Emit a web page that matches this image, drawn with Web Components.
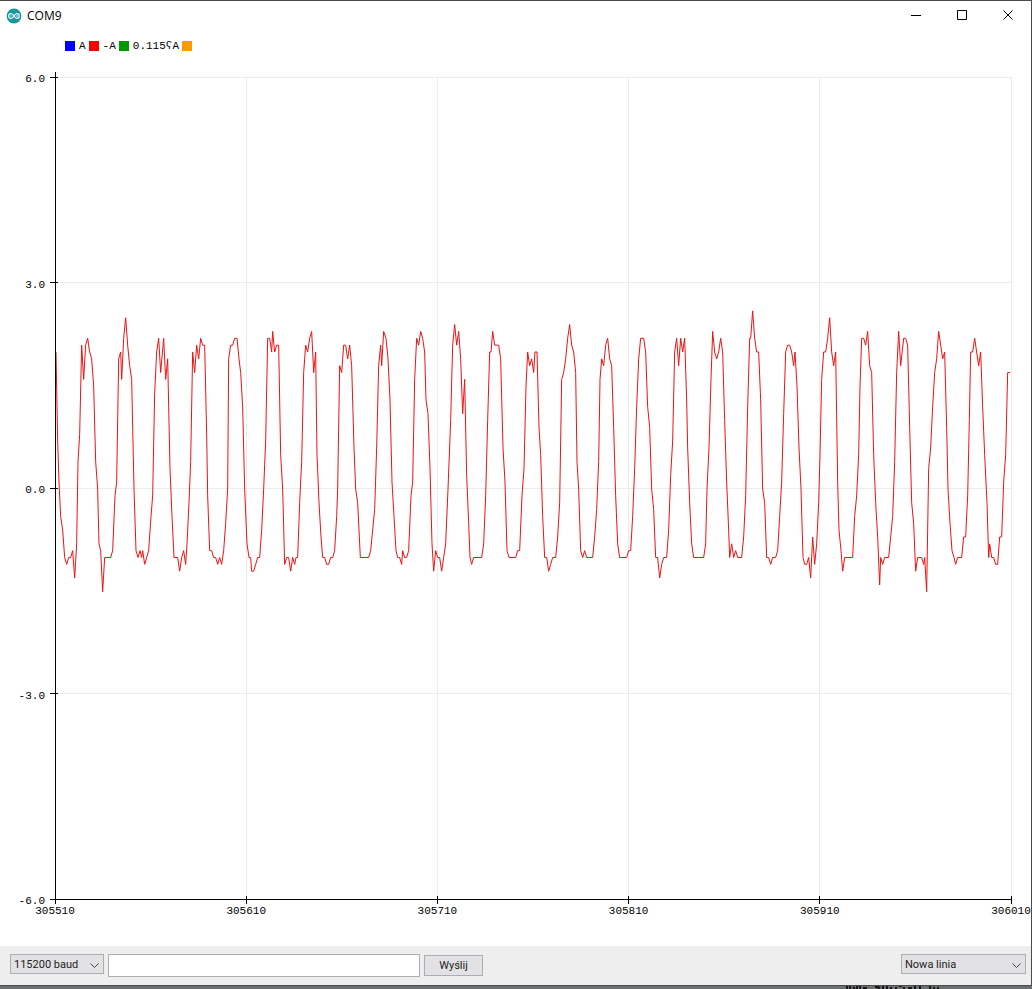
<!DOCTYPE html>
<html lang="pl">
<head>
<meta charset="utf-8">
<meta name="viewport" content="width=device-width, initial-scale=1">
<title>COM9</title>
<style>
    html, body {
        margin: 0;
        height: 100%;
        overflow: hidden;
        background: #6b6f70;
    }
</style>
</head>
<body>
<plotter-window>
    <title-bar slot="title">COM9</title-bar>
    <plot-legend slot="legend">
        <legend-item color="#0000ff">A</legend-item>
        <legend-item color="#ff0000">-A</legend-item>
        <legend-item color="#009900">0.115ʕA</legend-item>
        <legend-item color="#ff9900"></legend-item>
    </plot-legend>
    <serial-plot slot="plot"></serial-plot>
    <serial-toolbar slot="toolbar"></serial-toolbar>
</plotter-window>

<script>
class PlotterWindow extends HTMLElement {
    constructor() {
        super();
        this.attachShadow({ mode: 'open' });
        this.shadowRoot.innerHTML = `
            <style>
                :host {
                    display: flex;
                    flex-direction: column;
                    height: 100vh;
                    font-family: Roboto, "Liberation Sans", sans-serif;
                    color: #000;
                }
                .window {
                    flex: 1;
                    min-height: 0;
                    display: flex;
                    flex-direction: column;
                    box-sizing: border-box;
                    border: solid #4c4a4c;
                    border-width: 1px 1px 1px 0;
                    background: #fff;
                }
                .plot {
                    flex: 1;
                    min-height: 0;
                    display: flex;
                }
                .desktop {
                    height: 3px;
                    display: flex;
                    justify-content: flex-end;
                    padding-right: 92px;
                }
            </style>
            <div class="window">
                <slot name="title"></slot>
                <slot name="legend"></slot>
                <div class="plot"><slot name="plot"></slot></div>
                <slot name="toolbar"></slot>
            </div>
            <div class="desktop">
                <svg width="94" height="3" viewBox="0 0 94 3" aria-hidden="true">
                    <path d="M1 0v3M4 0v3M7 1l2 2M11 0v3M14 0v3M17 2h4M29 1h4M34 1l-2 2M37 0v3M41 0v3M45 1v2M50 1v2M53 0h3M58 1v2M62 2h4M69 0v3M74 0v3M84 0v3M88 1v2M92 1v2" stroke="#161616" stroke-width="2" fill="none"/>
                </svg>
            </div>
        `;
    }
}

class TitleBar extends HTMLElement {
    constructor() {
        super();
        this.attachShadow({ mode: 'open' });
        this.shadowRoot.innerHTML = `
            <style>
                :host {
                    display: flex;
                    align-items: center;
                    height: 29px;
                    padding-left: 6px;
                    font: 12px "Open Sans", "Noto Sans", sans-serif;
                }
                .name {
                    flex: 1;
                    padding-left: 5px;
                }
                button {
                    width: 46px;
                    height: 29px;
                    padding: 0;
                    border: 0;
                    background: none;
                }
                button svg {
                    display: block;
                    margin: auto;
                }
            </style>
            <svg width="16" height="16" viewBox="0 0 16 16" aria-hidden="true">
                <circle cx="8" cy="8" r="7.4" fill="#1b979c"/>
                <path d="M8 8C6.900 6.200 6 5.700 5 5.700a2.300 2.300 0 0 0 0 4.600C6 10.300 6.900 9.800 8 8s2-2.300 3-2.300a2.300 2.300 0 0 1 0 4.600C10 10.300 9.100 9.800 8 8z" fill="none" stroke="#e8f8f8" stroke-width="1.200"/>
                <path d="M4.200 8h1.600M10.200 8h1.600M11 7.200v1.600" stroke="#e8f8f8" stroke-width=".6"/>
            </svg>
            <span class="name"><slot></slot></span>
            <button aria-label="Minimalizuj">
                <svg width="11" height="11" viewBox="0 0 11 11"><path d="M0 5.500h10" stroke="#000"/></svg>
            </button>
            <button aria-label="Maksymalizuj">
                <svg width="11" height="11" viewBox="0 0 11 11"><path d="M.5.500h9v9h-9z" fill="none" stroke="#000"/></svg>
            </button>
            <button aria-label="Zamknij">
                <svg width="11" height="11" viewBox="0 0 11 11"><path d="M.5.500l9 9M9.500.500l-9 9" stroke="#000"/></svg>
            </button>
        `;
    }
}

class PlotLegend extends HTMLElement {
    constructor() {
        super();
        this.attachShadow({ mode: 'open' });
        this.shadowRoot.innerHTML = `
            <style>
                :host {
                    display: flex;
                    gap: 3px;
                    padding: 9px 0 0 65px;
                    height: 14px;
                    font: 11px/14px "Liberation Mono", monospace;
                }
            </style>
            <slot></slot>
        `;
    }
}

class LegendItem extends HTMLElement {
    constructor() {
        super();
        this.attachShadow({ mode: 'open' });
        this.shadowRoot.innerHTML = `
            <style>
                :host {
                    display: flex;
                    align-items: center;
                    gap: 4px;
                }
                .swatch {
                    width: 10px;
                    height: 10px;
                    background: ${this.getAttribute('color')};
                }
            </style>
            <span class="swatch"></span><slot></slot>
        `;
    }
}

// Turning points of the trace: "x,value", value in tenths.
// x runs over TRACE_WIDTH units, counted from the start of each part.
const TRACE_WIDTH = 2868;
const TRACE = [
    { start: -47, points: `
        47,20 52,7 56,1 61,-4 67,-6 73,-10 79,-11 85,-10 91,-10 97,-9 103,-13 109,-8 113,4 118,8 124,21 130,16
        136,21 142,22 148,20 154,19 160,15 166,4 172,0 176,-8 181,-9 187,-15 193,-10 211,-10 217,-9 224,-1 229,1
        235,19 241,20 244,16 250,22 256,25 262,21 268,18 274,16 281,0 287,-9 293,-10 299,-9 304,-10 307,-9 313,-11
        319,-10 325,-9 332,-4 337,-1 343,14 349,20 355,22 361,17 370,22 376,16 382,19 389,3 395,-4 401,-10 412,-10
        418,-12 424,-10 430,-9 436,-11 440,-8 446,-2 451,4 457,20 463,17 469,21 475,19 481,22 487,21 493,21 499,8
        502,-1 508,-9 514,-9 520,-10 526,-10 532,-11 538,-10 544,-11 550,-9 556,-5 562,0 565,19 571,21 577,21
        583,22 590,22 596,19 601,17 607,12 613,0 620,-8 626,-10 631,-10 634,-12 640,-12 646,-11 652,-10 658,-10
        664,-6 670,0 676,7 682,22 688,22 694,20 697,23 703,20 709,21 715,21 721,5 727,0` },
    { start: 673, points: `
        13,-11 19,-10 25,-10 31,-12 37,-10 43,-11 47,-10 52,-10 58,-2 64,4 70,17 76,21 82,20 88,22 94,23 100,17
        106,20 110,5 116,-2 122,-7 127,-10 133,-10 139,-11 145,-11 151,-10 157,-10 163,-9 169,-4 172,0 178,18
        184,17 190,21 196,21 202,19 208,21 214,18 221,6 226,0 232,-2 240,-10 265,-10 271,-9 277,-6 283,-3 289,6
        295,18 301,21 304,18 310,23 317,22 323,19 329,13 335,1 341,-4 347,-9 352,-10 358,-10 364,-11 367,-9
        373,-10 379,-10 385,-9 392,-1 397,1 403,16 409,22 415,21 421,23 427,22 433,20 437,13 443,11 449,3 455,-8
        460,-12 466,-9 472,-10 478,-10 484,-12 490,-10 496,-8 503,0 511,10 517,21 523,24 529,21 535,23 541,19
        547,11 553,16 559,2 565,-5 569,-10 574,-11 580,-10 604,-10 610,-8 616,-1 622,10 628,20 632,20 637,23
        643,21 655,21 661,19 668,6 674,1 680,-9 686,-10 706,-10 712,-9 718,-9` },
    { start: 1393, points: `
        5,-1 11,3 17,15 22,20 28,18 34,19 40,17 44,20 50,20 56,9 61,5 67,-4 73,-10 79,-10 85,-12 91,-11 97,-10
        106,-10 112,-7 118,-2 124,16 130,17 136,19 142,22 148,24 154,21 160,20 166,17 170,4 175,0 181,-9 187,-10
        193,-9 199,-10 217,-10 223,-7 229,-3 235,4 239,16 244,19 250,18 256,21 262,22 268,19 274,18 280,9 286,-1
        292,-8 298,-10 319,-10 325,-9 331,-9 337,-4 343,3 349,12 355,19 361,22 370,22 376,20 382,12 388,9 394,0
        400,-3 406,-10 412,-10 418,-13 424,-11 430,-10 439,-10 445,-6 451,2 457,7 463,20 469,22 475,18 481,22
        487,20 493,22 499,13 502,6 508,-2 514,-8 520,-10 550,-10 556,-8 560,0 566,6 572,16 577,23 583,20 589,19
        595,20 601,22 607,20 613,10 619,1 625,-6 628,-10 634,-8 640,-10 646,-9 652,-10 664,-10 670,-7 676,-1
        682,12 688,22 691,22 697,26 703,22 709,20 715,20 721,13 727,0 733,-2 739,-10 745,-10` },
    { start: 2143, points: `
        1,-11 7,-10 16,-10 22,-9 28,-4 34,1 40,11 46,20 52,21 58,21 64,20 70,18 74,20 80,15 86,6 92,0 98,-10
        103,-11 109,-11 115,-10 121,-13 127,-7 133,-11 139,-8 145,-2 149,5 154,16 160,20 166,20 172,22 178,25
        184,20 190,18 196,20 202,1 206,-6 212,-9 217,-12 223,-10 247,-10 253,-4 259,-1 265,5 269,15 274,22 280,22
        286,21 292,23 298,18 304,17 310,5 316,-2 322,-7 328,-14 331,-10 337,-11 343,-10 355,-10 361,-7 367,-4
        373,4 379,17 385,23 391,18 400,22 406,22 412,21 418,9 424,-2 430,-5 436,-12 442,-10 454,-10 460,-11
        463,-10 469,-15 475,3 481,6 487,12 493,17 499,19 505,23 511,21 517,19 523,20 529,9 533,0 539,-5 545,-9
        551,-10 556,-11 562,-10 574,-10 580,-7 586,-7 592,-1 597,10 601,20 607,20 613,22 619,20 625,18 631,20
        637,12 643,5 650,-2 655,-10 658,-8 664,-10 670,-10 676,-11 682,-11 688,-7 694,-7 700,1 706,5 712,17
        719,17` }
];

class SerialPlot extends HTMLElement {
    constructor() {
        super();
        this.attachShadow({ mode: 'open' });
        this.render();
    }

    tracePoints() {
        return TRACE.flatMap(part => part.points.trim().split(/\s+/).map(pair => {
            const [x, value] = pair.split(',').map(Number);
            return `${part.start + x},${60 - value}`;
        })).join(' ');
    }

    render() {
        const rows = ['6.0', '3.0', '0.0', '-3.0', '-6.0'].map((label, i) => {
            const y = `${i * 25}%`;
            return `
                <line class="grid" x1="0" x2="100%" y1="${y}" y2="${y}"/>
                <line class="axis" x1="-5" x2="3" y1="${y}" y2="${y}"/>
                <text x="-10" y="${y}" dy="5" text-anchor="end">${label}</text>`;
        }).join('');

        const columns = [305510, 305610, 305710, 305810, 305910, 306010].map((label, i) => {
            const x = `${i * 20}%`;
            return `
                <line class="grid" x1="${x}" x2="${x}" y1="0" y2="100%"/>
                <svg x="${x}" y="100%">
                    <line class="axis" x1="0" x2="0" y1="-3" y2="5"/>
                </svg>
                <text x="${x}" y="100%" dy="15" text-anchor="middle">${label}</text>`;
        }).join('');

        this.shadowRoot.innerHTML = `
            <style>
                :host {
                    flex: 1;
                    display: flex;
                    min-height: 0;
                    padding: 24px 20px 47px 55px;
                }
                svg {
                    overflow: visible;
                }
                .plot {
                    flex: 1;
                    min-width: 0;
                    font: 11px "Liberation Mono", monospace;
                }
                line {
                    shape-rendering: crispEdges;
                }
                .grid {
                    stroke: #ececec;
                }
                .axis {
                    stroke: #000;
                }
                polyline {
                    fill: none;
                    stroke: #ee1111;
                    stroke-width: 1px;
                    vector-effect: non-scaling-stroke;
                }
            </style>
            <svg class="plot" role="img" aria-label="COM9">
                ${rows}
                ${columns}
                <svg x="1" y="1" width="100%" height="100%" viewBox="0 0 ${TRACE_WIDTH} 120" preserveAspectRatio="none">
                    <polyline points="${this.tracePoints()}"/>
                </svg>
                <line class="axis" x1="0" x2="0" y1="-5" y2="100%"/>
                <line class="axis" x1="0" x2="100%" y1="100%" y2="100%"/>
            </svg>
        `;
    }
}

class SerialToolbar extends HTMLElement {
    constructor() {
        super();
        this.attachShadow({ mode: 'open' });
        this.shadowRoot.innerHTML = `
            <style>
                :host {
                    display: flex;
                    align-items: flex-start;
                    gap: 4px;
                    padding: 8px 5px 8px 10px;
                    background: #eee;
                }
                select, input, button {
                    box-sizing: border-box;
                    margin: 0;
                    border: 1px solid #adadb3;
                    border-radius: 0;
                    background: #e2e1e3;
                    color: #222;
                    font: 11px Roboto, "Liberation Sans", sans-serif;
                }
                select {
                    appearance: none;
                    width: 100%;
                    height: 20px;
                    padding: 0 18px 0 3px;
                }
                .combo {
                    display: grid;
                    align-items: center;
                }
                .combo > * {
                    grid-area: 1 / 1;
                }
                .combo svg {
                    justify-self: end;
                    margin: 3px 5px 0 0;
                    pointer-events: none;
                }
                .baud {
                    width: 94px;
                }
                .ending {
                    width: 125px;
                    margin-left: auto;
                }
                input {
                    flex: 0 1 312px;
                    min-width: 0;
                    height: 23px;
                    background: #fff;
                }
                button {
                    width: 59px;
                    height: 21px;
                    margin-top: 1px;
                    padding: 0;
                }
            </style>
            <label class="combo baud">
                <select aria-label="Prędkość"><option>115200 baud</option></select>
                <svg width="9" height="6" viewBox="0 0 9 6"><path d="M.5.500l4 4 4-4" fill="none" stroke="#444"/></svg>
            </label>
            <input type="text" aria-label="Wiadomość">
            <button>Wyślij</button>
            <label class="combo ending">
                <select aria-label="Koniec linii"><option>Nowa linia</option></select>
                <svg width="9" height="6" viewBox="0 0 9 6"><path d="M.5.500l4 4 4-4" fill="none" stroke="#444"/></svg>
            </label>
        `;
    }
}

customElements.define('plotter-window', PlotterWindow);
customElements.define('title-bar', TitleBar);
customElements.define('plot-legend', PlotLegend);
customElements.define('legend-item', LegendItem);
customElements.define('serial-plot', SerialPlot);
customElements.define('serial-toolbar', SerialToolbar);
</script>
</body>
</html>
